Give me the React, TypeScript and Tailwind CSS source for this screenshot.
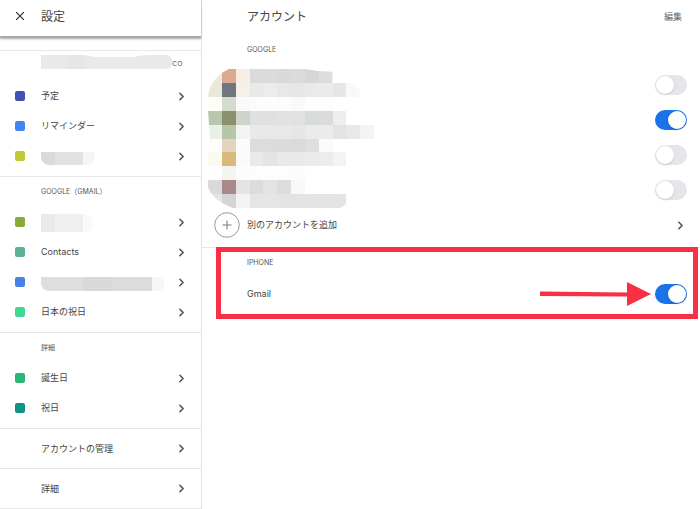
import React, { useState } from "react";
import { ChevronRight, X } from "lucide-react";

type Patch = { x: number; w: number; fill: string };

type Item = {
  name?: string;
  color: string;
  hidden?: { height: number; width: number; patches: Patch[]; radius: string };
};

const calendars: Item[] = [
  { name: "予定", color: "bg-[#3f51b5]" },
  { name: "リマインダー", color: "bg-[#4285f4]" },
  {
    color: "bg-[#c0ca33]",
    hidden: {
      width: 54,
      height: 13,
      radius: "rounded-b-lg mt-1",
      patches: [
        { x: 0, w: 14, fill: "#dadada" },
        { x: 14, w: 28, fill: "#e2e2e2" },
        { x: 42, w: 12, fill: "#f5f5f5" },
      ],
    },
  },
];

const gmailCalendars: Item[] = [
  {
    color: "bg-[#8aab37]",
    hidden: {
      width: 52,
      height: 18,
      radius: "rounded-r-lg mt-0.5",
      patches: [
        { x: 0, w: 14, fill: "#e9e9e9" },
        { x: 14, w: 28, fill: "#efefef" },
        { x: 42, w: 10, fill: "#fafafa" },
      ],
    },
  },
  { name: "Contacts", color: "bg-[#5bb391]" },
  {
    color: "bg-[#4a82e4]",
    hidden: {
      width: 123,
      height: 14,
      radius: "rounded-bl-lg mt-1",
      patches: [
        { x: 0, w: 42, fill: "#dedede" },
        { x: 42, w: 28, fill: "#d9d9d9" },
        { x: 70, w: 41, fill: "#dcdcdc" },
        { x: 111, w: 12, fill: "#f7f7f7" },
      ],
    },
  },
  { name: "日本の祝日", color: "bg-[#40d791]" },
];

const moreCalendars: Item[] = [
  { name: "誕生日", color: "bg-[#2bb673]" },
  { name: "祝日", color: "bg-[#109384]" },
];

// one colour per mosaic cell, row by row
const mosaic = [
  ["#efe9dd", "#dbaa90", "#f5efe4", "#d9dad9", "#dadbdb", "#d8d9d9", "#dbdbdb", "#d5d6d6", "#dcdddd"],
  ["#ece7db", "#70767d", "#f6f1e6", "#e9e9e9", "#ececec", "#e8e8e8", "#e7e7e7", "#eaeaea", "#ebebeb", "#e6e6e6", "#f9f9f9"],
  ["#fdfdfa", "#d3dccd", "#fafafa", "#fcfcfc", "#fdfdfd", "#fcfcfc", "#f9f9f9", "#fdfdfd", "#fdfdfd"],
  ["#bac6ae", "#8b8f6c", "#cfd4cb", "#e0e1e1", "#dfe0e0", "#e1e2e2", "#e0e1e1", "#d8dbdb", "#d9dcdb", "#eeeeee"],
  ["#eaf0e6", "#b7c6a9", "#f2f4f1", "#e9e9e9", "#e8e8e8", "#e8e8e8", "#e6e6e6", "#ebebeb", "#ebebeb", "#e3e3e3", "#e8e8e8", "#f4f4f4"],
  ["#fdfdf9", "#e5d3be", "#fbfbfb", "#dadddd", "#dbdddd", "#d9dcdc", "#d9dbdb", "#dddfdf", "#fafafa"],
  ["#f9fbee", "#d9ba7c", "#fafafa", "#e9e9e9", "#e4e4e4", "#e9e9e9", "#e9e9e9", "#ebebeb", "#ececec", "#f3f3f3"],
  ["#fefefd", "#f4f4f0", "#fcfcfc", "#fdfdfd", "#fdfdfd", "#fdfdfd", "#fcfcfc"],
  ["#d9dada", "#ad888a", "#e4e4e4", "#dcdcdc", "#e3e3e3", "#dcdcdc", "#f8f8f8"],
  ["#e3e4e6", "#d4d4d8", "#f3f3f3", "#e5e5e5", "#e5e5e5", "#e4e4e4", "#e3e3e3", "#e3e3e3", "#e3e3e3", "#e4e4e4"],
];

const Chevron = () => (
  <ChevronRight size={13} strokeWidth={3} className="shrink-0 text-[#555]" />
);

const SidebarRow = ({ item }: { item: Item }) => {
  return (
    <li>
      <button className="flex h-[30px] w-full items-center pl-[15px] pr-[13px] text-left">
        <span className={`mr-4 size-2.5 rounded-[2px] ${item.color}`}></span>
        {item.name}
        {item.hidden && (
          <svg
            width={item.hidden.width}
            height={item.hidden.height}
            className={item.hidden.radius}
          >
            {item.hidden.patches.map((p) => (
              <rect key={p.x} x={p.x} width={p.w} height="100%" fill={p.fill} />
            ))}
          </svg>
        )}
        <span className="ml-auto">
          <Chevron />
        </span>
      </button>
    </li>
  );
};

const SidebarSection = ({ title, items }: { title: string; items: Item[] }) => {
  return (
    <section className="border-b border-[#e8e8e8] pb-[5px]">
      <h2 className="flex h-[30px] items-center pl-[41px] text-[7px] text-[#555]">
        {title}
      </h2>
      <ul>
        {items.map((item, index) => (
          <SidebarRow key={index} item={item} />
        ))}
      </ul>
    </section>
  );
};

const Switch = ({ id, label, on }: { id: string; label?: string; on?: boolean }) => {
  const [checked, setChecked] = useState(!!on);
  return (
    <input
      id={id}
      type="checkbox"
      role="switch"
      aria-label={label}
      checked={checked}
      onChange={() => setChecked(!checked)}
      className="flex h-5 w-8 shrink-0 cursor-pointer appearance-none items-center rounded-full bg-[#e5e5ea] px-px before:size-[18px] before:rounded-full before:bg-white before:shadow before:content-[''] checked:justify-end checked:bg-[#1a73e8]"
    />
  );
};

const Sidebar = () => {
  return (
    <aside className="w-[202px] shrink-0 border-r border-[#e2e2e2]">
      <header className="flex h-[38px] items-center border-b-2 border-[#aaa] pb-1 pl-[13px] shadow-[0_1px_2px_#aaa]">
        <button aria-label="閉じる" className="mr-3.5">
          <X size={14} strokeWidth={2} className="text-[#444]" />
        </button>
        <h1 className="pt-0.5 text-[12px]">設定</h1>
      </header>

      <section className="mt-3 border-y border-[#e8e8e8] pb-[5px]">
        <h2 className="flex h-[30px] items-start pl-[41px] pt-1 text-[9px] text-[#777]">
          <svg width="131" height="14" className="shrink-0">
            <path
              d="M0 0H44Q50 2 60 2H92Q100 0 108 0H127Q131 2 131 7T127 14H0Z"
              fill="#e9e9e9"
            />
            <rect x="28" width="14" height="14" fill="#e6e6e6" />
          </svg>
          <span className="leading-4">co</span>
        </h2>
        <ul>
          {calendars.map((item, index) => (
            <SidebarRow key={index} item={item} />
          ))}
        </ul>
      </section>

      <SidebarSection title="GOOGLE（GMAIL）" items={gmailCalendars} />
      <SidebarSection title="詳細" items={moreCalendars} />

      {["アカウントの管理", "詳細"].map((name) => (
        <button
          key={name}
          className="flex h-10 w-full items-center justify-between border-b border-[#e8e8e8] pl-[41px] pr-[13px]"
        >
          {name}
          <Chevron />
        </button>
      ))}
    </aside>
  );
};

const Accounts = () => {
  return (
    <main className="min-w-0 flex-1">
      <header className="flex h-[34px] items-center justify-between pl-[45px] pr-[18px]">
        <h1 className="text-[12px]">アカウント</h1>
        <button className="text-[9px] text-[#666]">編集</button>
      </header>

      <section className="border-b border-[#e8e8e8] pb-1">
        <h2 className="flex h-[33px] items-center pl-[45px] text-[7px] text-[#555]">
          GOOGLE
        </h2>
        <ul className="relative pr-[13px]">
          {[false, true, false, false].map((on, index) => (
            <li key={index} className="flex h-[35px] items-center justify-end">
              <Switch id={`google-${index}`} label={`GOOGLE ${index + 1}`} on={on} />
            </li>
          ))}
          <svg
            viewBox="0 0 12 10"
            width="166"
            height="139"
            preserveAspectRatio="none"
            shapeRendering="crispEdges"
            className="absolute left-1.5 top-0.5"
          >
            <clipPath id="smear">
              <path d="M1.5 0H7Q8 .2 9 .2V1H10.5Q11 1.3 11 2V3H12V9H10.3Q10 10 9.4 10H1.8Q.3 9.4 0 8.5V6L.15 5L0 3V2Q.1 .7 1.5 0Z" />
            </clipPath>
            <g clipPath="url(#smear)">
              {mosaic.map((row, y) =>
                row.map((fill, x) => (
                  <rect key={`${x}-${y}`} x={x} y={y} width="1" height="1" fill={fill} />
                ))
              )}
            </g>
          </svg>
        </ul>
        <button className="flex h-9 w-full items-center pl-3 pr-[13px]">
          <svg width="26" height="26" viewBox="0 0 26 26" fill="none" className="mr-[7px]">
            <circle cx="13" cy="13" r="12.3" stroke="#999" />
            <path d="M13 8.5V17.5M8.5 13H17.5" stroke="#777" />
          </svg>
          別のアカウントを追加
          <span className="ml-auto">
            <Chevron />
          </span>
        </button>
      </section>

      <section className="relative pb-2.5">
        <h2 className="flex h-[31px] items-center pl-[45px] text-[7px] text-[#555]">
          IPHONE
        </h2>
        <div className="flex h-[30px] items-center pl-[45px] pr-[13px]">
          <label htmlFor="iphone-gmail">Gmail</label>
          <svg width="111" height="24" viewBox="0 0 111 24" className="ml-auto mr-1">
            <path d="M0 9.5L87 10.5V0L111 12L87 24V14.5L0 14Z" fill="#f92f43" />
          </svg>
          <Switch id="iphone-gmail" on />
        </div>
        <span className="pointer-events-none absolute -top-px bottom-0 left-3.5 right-0.5 border-5 border-[#f92f43]"></span>
      </section>
    </main>
  );
};

const App = () => {
  return (
    <div className="flex min-h-screen items-start bg-white font-['Inter','Noto_Sans_CJK_JP',sans-serif] text-[9px] text-[#444]">
      <Sidebar />
      <Accounts />
    </div>
  );
};

export default App;
